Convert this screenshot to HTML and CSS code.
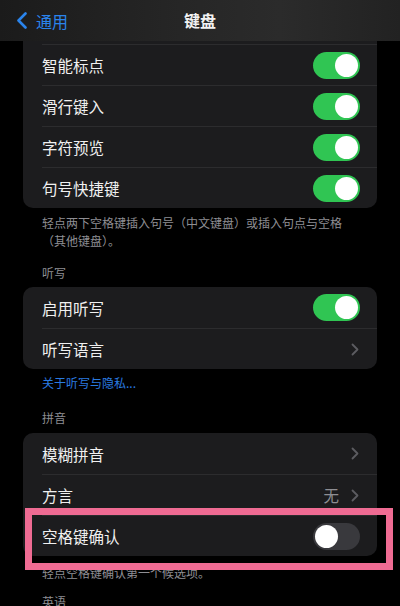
FILE: index.html
```html
<!DOCTYPE html>
<html lang="zh-CN">
<head>
<meta charset="utf-8">
<link rel="stylesheet" href="styles.css">
</head>
<body>
<div class="screen">
  <header class="nav">
    <div class="back">
      <svg class="back-icon" width="12" height="17" viewBox="0 0 12 17"><path d="M9.5 1.5 L2.5 8.5 L9.5 15.5" fill="none" stroke="#2a84ec" stroke-width="2.6" stroke-linecap="round" stroke-linejoin="round"/></svg>
      <span>通用</span>
    </div>
    <div class="title">键盘</div>
  </header>

  <main class="content">
    <section class="card card-top">
      <div class="row"><span class="label">智能标点</span><span class="toggle on"></span></div>
      <div class="row"><span class="label">滑行键入</span><span class="toggle on"></span></div>
      <div class="row"><span class="label">字符预览</span><span class="toggle on"></span></div>
      <div class="row"><span class="label">句号快捷键</span><span class="toggle on"></span></div>
    </section>
    <p class="note">轻点两下空格键插入句号（中文键盘）或插入句点与空格（其他键盘）。</p>

    <h2 class="section">听写</h2>
    <section class="card">
      <div class="row"><span class="label">启用听写</span><span class="toggle on"></span></div>
      <div class="row"><span class="label">听写语言</span><span class="chev"><svg width="8" height="13" viewBox="0 0 8 13"><path d="M1.5 1.5 L6.5 6.5 L1.5 11.5" fill="none" stroke="#5c5c61" stroke-width="1.8" stroke-linecap="round" stroke-linejoin="round"/></svg></span></div>
    </section>
    <p class="link">关于听写与隐私...</p>

    <h2 class="section section-pinyin">拼音</h2>
    <section class="card">
      <div class="row"><span class="label">模糊拼音</span><span class="chev"><svg width="8" height="13" viewBox="0 0 8 13"><path d="M1.5 1.5 L6.5 6.5 L1.5 11.5" fill="none" stroke="#5c5c61" stroke-width="1.8" stroke-linecap="round" stroke-linejoin="round"/></svg></span></div>
      <div class="row"><span class="label">方言</span><span class="value">无</span><span class="chev"><svg width="8" height="13" viewBox="0 0 8 13"><path d="M1.5 1.5 L6.5 6.5 L1.5 11.5" fill="none" stroke="#5c5c61" stroke-width="1.8" stroke-linecap="round" stroke-linejoin="round"/></svg></span></div>
      <div class="row"><span class="label">空格键确认</span><span class="toggle"></span></div>
    </section>
    <p class="note note-last">轻点空格键确认第一个候选项。</p>
    <h2 class="section section-en">英语</h2>
  </main>

  <div class="highlight"></div>
</div>
</body>
</html>
```

FILE: styles.css
```css
* { box-sizing: border-box; margin: 0; padding: 0; }
html, body { background: #000; }
body {
  width: 400px;
  height: 606px;
  overflow: hidden;
  font-family: "Noto Sans CJK SC", "Noto Sans", sans-serif;
  color: #fff;
}
.screen { position: relative; width: 400px; height: 606px; overflow: hidden; background: #000; }

.nav {
  height: 41px;
  display: flex;
  align-items: center;
  position: relative;
  background: linear-gradient(to right, #1b1b1b 0%, #262626 45%, #2b2b2b 70%, #222 100%);
}
.back {
  display: flex;
  align-items: center;
  gap: 8px;
  padding-left: 16px;
  color: #2a84ec;
  font-size: 16px;
  line-height: 20px;
}
.back-icon { display: block; }
.title {
  position: absolute;
  left: 0; right: 0; top: 0;
  height: 41px;
  line-height: 41px;
  text-align: center;
  font-size: 16px;
  font-weight: 700;
  color: #f2f2f2;
}

.content { display: flex; flex-direction: column; }

.card {
  margin: 0 23px;
  background: #1c1c1e;
  border-radius: 10px;
  overflow: hidden;
}
.card-top {
  border-radius: 0 0 10px 10px;
  padding-top: 3px;
}
.row {
  height: 41px;
  display: flex;
  align-items: center;
  margin-left: 19px;
  padding-right: 17px;
  border-top: 1px solid #2c2c2e;
}
.card > .row:first-child { border-top: none; }
.card-top > .row:first-child { border-top: 1px solid #2c2c2e; }
.label {
  flex: 1;
  font-size: 15.5px;
  line-height: 20px;
  color: #f0f0f0;
}
.value {
  font-size: 15.5px;
  color: #8e8e93;
  margin-right: 12px;
}
.chev { display: flex; align-items: center; margin-right: 1px; }

.toggle {
  width: 47px;
  height: 27px;
  border-radius: 14px;
  background: #39393d;
  position: relative;
}
.toggle::after {
  content: "";
  position: absolute;
  top: 2px;
  left: 2px;
  width: 23px;
  height: 23px;
  border-radius: 50%;
  background: #fff;
}
.toggle.on { background: #30c553; }
.toggle.on::after { left: 22px; }

.note {
  margin-top: 6px;
  padding: 0 42px;
  font-size: 12px;
  line-height: 18px;
  color: #8e8e93;
}
.section {
  margin-top: 14px;
  margin-bottom: 5px;
  padding: 0 42px;
  font-size: 12px;
  line-height: 18px;
  font-weight: 400;
  color: #8e8e93;
}
.link {
  margin-top: 5px;
  padding: 0 42px;
  font-size: 12px;
  line-height: 18px;
  color: #2a7be0;
}
.section-pinyin { margin-top: 17px; margin-bottom: 6px; }
.note-last { margin-top: 8px; }
.section-en { margin-top: 11px; }

.highlight {
  position: absolute;
  left: 25px;
  top: 508px;
  width: 368px;
  height: 62px;
  border: 7px solid #ef6b93;
}
```
